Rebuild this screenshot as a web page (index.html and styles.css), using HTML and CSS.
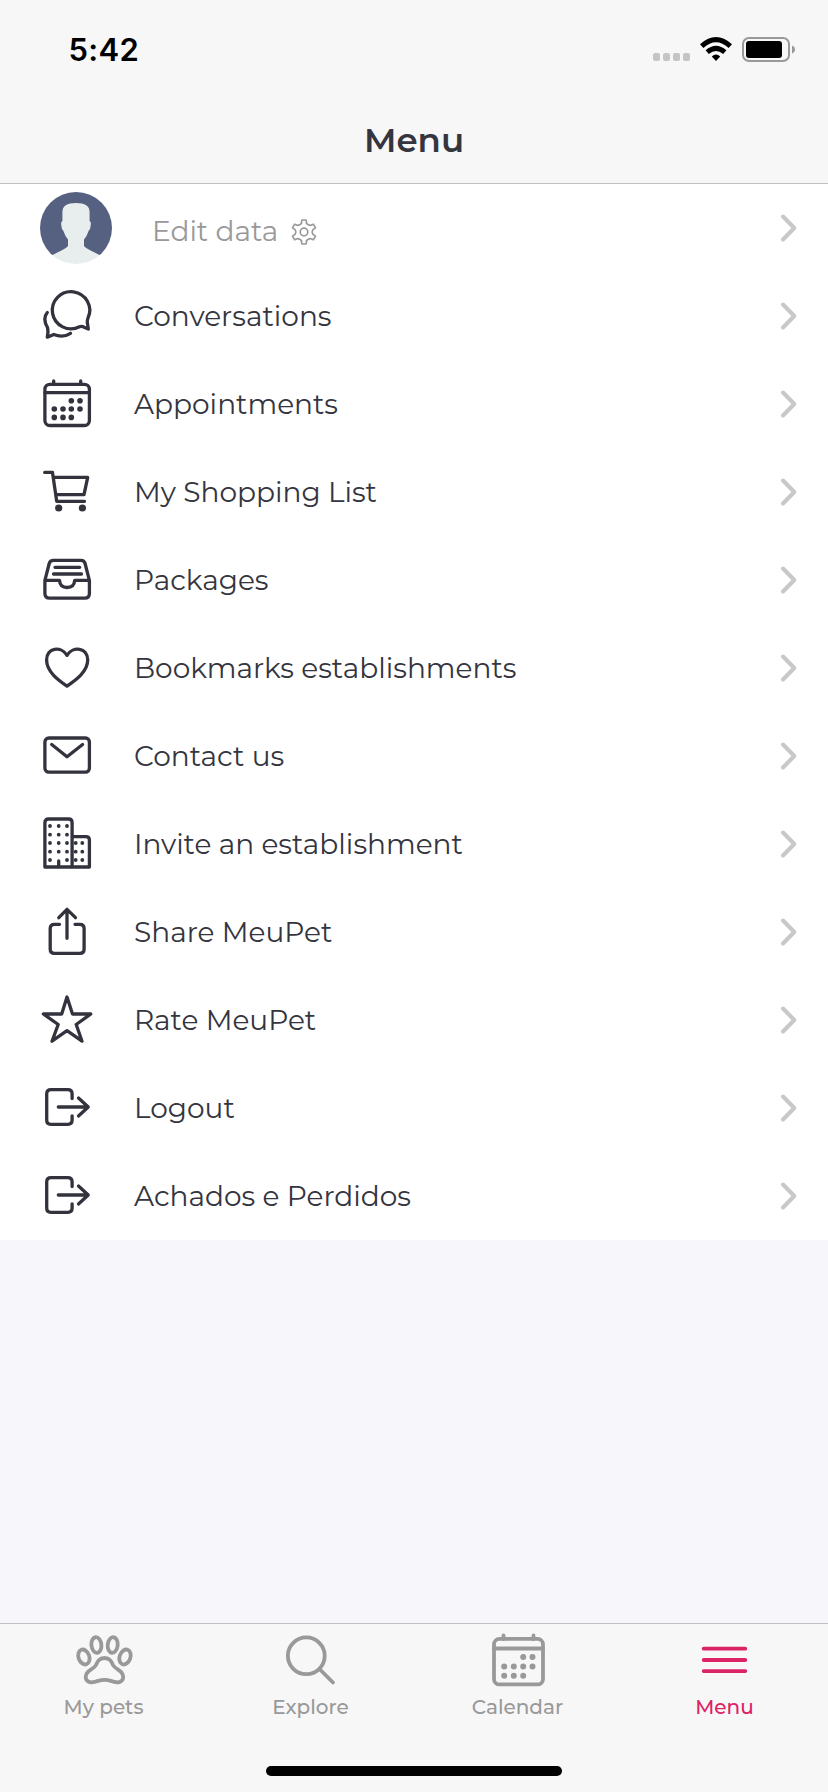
FILE: index.html
```html
<!DOCTYPE html>
<html lang="en">
<head>
<meta charset="utf-8">
<title>Menu</title>
<link rel="stylesheet" href="styles.css">
</head>
<body>
<div class="screen">
  <header class="header">
    <div class="status">
      <span class="time">5:42</span>
      <div class="indicators">
        <div class="signal"><i></i><i></i><i></i><i></i></div>
        <svg class="wifi" viewBox="0 0 32 24" fill="none" stroke="#000" stroke-width="5"><path d="M1.7 9.2Q16-3.8 30.3 9.2"/><path d="M7.2 15.2Q16 7.6 24.8 15.2"/><path d="M16 24l-4.2-4.6q4.2-3.6 8.4 0z" fill="#000" stroke="none"/></svg>
        <svg class="battery" viewBox="0 0 54 26"><rect x="1" y="1" width="46" height="23" rx="6" fill="none" stroke="#999" stroke-width="2"/><rect x="4" y="4" width="36" height="17" rx="3"/><path d="M50 8.5q3 1.2 3 4t-3 4z" fill="#999"/></svg>
      </div>
    </div>
    <h1 class="title">Menu</h1>
  </header>

  <main class="list">
    <a class="row profile">
      <svg class="avatar" viewBox="0 0 72 72"><defs><clipPath id="round"><circle cx="36" cy="36" r="36"/></clipPath></defs><g clip-path="url(#round)"><path fill="#566182" d="M0 0H72V63H0Z"/><path fill="#e8eded" d="M22.4 20Q22.4 11 36 11T49.6 20V29Q51.5 30 50.6 34 50 38 48.8 38.5 47 44 44 47.5V54Q45 56 59.5 63L72 63V72H0V63L12.5 63Q27 56 28 54V47.5Q25 44 23.2 38.5 22 38 21.4 34 20.5 30 22.4 29Z"/></g></svg>
      <span class="label edit">Edit data</span>
      <svg class="gear" viewBox="0 0 26 26"><path d="M10.400 4.400 10.900 1H15.100L15.600 4.400Q17 6.100 19.150 6.450L22.340 5.180 24.440 8.820 21.750 10.950Q20.600 13 21.750 15.050L24.440 17.180 22.340 20.820 19.150 19.550Q17 19.900 15.600 21.600L15.100 25H10.900L10.400 21.600Q9 19.900 6.850 19.550L3.660 20.820 1.560 17.180 4.250 15.050Q5.400 13 4.250 10.950L1.560 8.820 3.660 5.180 6.850 6.450Q9 6.100 10.400 4.400Z"/><circle cx="13" cy="13" r="3.800"/></svg>
      <svg class="chevron" viewBox="0 0 18 28"><path d="M3 2.500 14.300 14 3 25.500"/></svg>
    </a>
    <a class="row">
      <svg class="icon" viewBox="0 0 60 60"><path d="M42.500 40.800Q45 39.800 47 41.200L51.300 43 50.300 36.500Q50 34.500 51 32A18.700 18.600 0 1 0 42.500 40.800Z"/><path d="M10.300 26.500C6.500 31 7.500 36.500 10.500 41.500Q11.500 45 10.300 51.200L16.800 48.500C23 51 28.500 50.500 33.500 47.300"/></svg>
      <span class="label">Conversations</span>
      <svg class="chevron" viewBox="0 0 18 28"><path d="M3 2.500 14.300 14 3 25.500"/></svg>
    </a>
    <a class="row">
      <svg class="icon" viewBox="0 0 60 60"><rect x="7.900" y="10.300" width="44.500" height="41.200" rx="5"/><path d="M8 18.700H52M16.700 10V7M43.700 10V7"/><path class="dots" d="M34.300 26.700h0M43 26.700h0M17.300 35h0M26 35h0M34.300 35h0M43 35h0M17.300 43.400h0M26 43.400h0M34.300 43.400h0"/></svg>
      <span class="label">Appointments</span>
      <svg class="chevron" viewBox="0 0 18 28"><path d="M3 2.500 14.300 14 3 25.500"/></svg>
    </a>
    <a class="row">
      <svg class="icon" viewBox="0 0 60 60"><path d="M7.700 10.400H15.500L19.700 39.300H47.500M16.300 15.400H50.700L47 32.600H18.700"/><circle class="solid" cx="21.700" cy="46" r="3.600"/><circle class="solid" cx="45.400" cy="46" r="3.600"/></svg>
      <span class="label">My Shopping List</span>
      <svg class="chevron" viewBox="0 0 18 28"><path d="M3 2.500 14.300 14 3 25.500"/></svg>
    </a>
    <a class="row">
      <svg class="icon" viewBox="0 0 60 60"><path d="M16.500 10.300H44Q47.500 10.300 48.200 14L52.400 30.400V43.500Q52.400 48.200 47.700 48.200H12.600Q7.900 48.200 7.900 43.500V30.400L12.100 14Q12.800 10.300 16.500 10.300ZM8 30.400H22.500Q23 37.500 30.100 37.500T37.700 30.400H52.300M18 17.300H42.700M16.500 24H44.500"/></svg>
      <span class="label">Packages</span>
      <svg class="chevron" viewBox="0 0 18 28"><path d="M3 2.500 14.300 14 3 25.500"/></svg>
    </a>
    <a class="row">
      <svg class="icon" viewBox="0 0 60 60"><path d="M30 17.300C24 7.500 9.600 9.500 9.600 22C9.600 34 22 42.500 30 48.100C38 42.500 50.700 34 50.700 22C50.700 9.500 36 7.500 30 17.300Z"/></svg>
      <span class="label">Bookmarks establishments</span>
      <svg class="chevron" viewBox="0 0 18 28"><path d="M3 2.500 14.300 14 3 25.500"/></svg>
    </a>
    <a class="row">
      <svg class="icon" viewBox="0 0 60 60"><rect x="7.900" y="12" width="44.500" height="34.200" rx="4"/><path d="M14.700 18.500 30 30.700 45.600 18.500"/></svg>
      <span class="label">Contact us</span>
      <svg class="chevron" viewBox="0 0 18 28"><path d="M3 2.500 14.300 14 3 25.500"/></svg>
    </a>
    <a class="row">
      <svg class="icon" viewBox="0 0 60 60"><path d="M7.900 53V8.500Q7.900 5 11.400 5H31.600Q35.100 5 35.100 8.500V53ZM35.100 22.600H49Q52.400 22.600 52.400 26V53H35.100M21.700 52V47"/><path class="dots small" d="M13 12h0M21.700 12h0M30 12h0M13 20.700h0M21.700 20.700h0M30 20.700h0M13 29h0M21.700 29h0M30 29h0M13 37.700h0M21.700 37.700h0M30 37.700h0M13 46h0M30 46h0M38.700 29h0M45.300 29h0M38.700 37.700h0M45.300 37.700h0M38.700 46h0M45.300 46h0"/></svg>
      <span class="label">Invite an establishment</span>
      <svg class="chevron" viewBox="0 0 18 28"><path d="M3 2.500 14.300 14 3 25.500"/></svg>
    </a>
    <a class="row">
      <svg class="icon" viewBox="0 0 60 60"><path d="M30 36.300V7.500M21.800 15.700 30 7.300 38.500 15.700M22.500 22.300H17.500Q13.200 22.300 13.200 26.600V47Q13.200 51.400 17.500 51.400H42.800Q47.100 51.400 47.100 47V26.600Q47.100 22.300 42.800 22.300H38"/></svg>
      <span class="label">Share MeuPet</span>
      <svg class="chevron" viewBox="0 0 18 28"><path d="M3 2.500 14.300 14 3 25.500"/></svg>
    </a>
    <a class="row">
      <svg class="icon" viewBox="0 0 60 60"><path d="M30 7 35.500 24H53.800L39.200 34.500 45 51.200 30 40.700 15 51.200 21.200 34.500 6.400 24H24.700Z"/></svg>
      <span class="label">Rate MeuPet</span>
      <svg class="chevron" viewBox="0 0 18 28"><path d="M3 2.500 14.300 14 3 25.500"/></svg>
    </a>
    <a class="row">
      <svg class="icon" viewBox="0 0 60 60"><path d="M35.100 20.500V16Q35.100 11.700 30.800 11.700H14Q9.700 11.700 9.700 16V42Q9.700 46.300 14 46.300H30.800Q35.100 46.300 35.100 42V37.800M21.300 29H51.200M41.500 20 51.200 29 41.500 38"/></svg>
      <span class="label">Logout</span>
      <svg class="chevron" viewBox="0 0 18 28"><path d="M3 2.500 14.300 14 3 25.500"/></svg>
    </a>
    <a class="row">
      <svg class="icon" viewBox="0 0 60 60"><path d="M35.100 20.500V16Q35.100 11.700 30.800 11.700H14Q9.700 11.700 9.700 16V42Q9.700 46.300 14 46.300H30.800Q35.100 46.300 35.100 42V37.800M21.300 29H51.200M41.500 20 51.200 29 41.500 38"/></svg>
      <span class="label">Achados e Perdidos</span>
      <svg class="chevron" viewBox="0 0 18 28"><path d="M3 2.500 14.300 14 3 25.500"/></svg>
    </a>
  </main>

  <footer class="footer">
    <nav class="tabs">
      <a class="tab">
        <svg viewBox="0 0 64 64"><ellipse cx="11.900" cy="29" rx="5.400" ry="7.700" transform="rotate(-20 11.900 29)"/><ellipse cx="24.400" cy="17" rx="5" ry="7.800" transform="rotate(-6 24.400 17)"/><ellipse cx="40.700" cy="17" rx="5" ry="7.800" transform="rotate(6 40.700 17)"/><ellipse cx="53" cy="29" rx="5.400" ry="7.700" transform="rotate(20 53 29)"/><path d="M32.500 30C38 30 39.500 33.500 41 37C43.500 42 51.200 41.500 51.200 49C51.200 53 47.500 55 44 54.200C40 53.500 37 51.800 32.500 51.800S25 53.500 21 54.200C17.500 55 13.700 53 13.700 49C13.700 41.500 21.500 42 24 37C25.500 33.500 27 30 32.500 30Z"/></svg>
        <span class="cap">My pets</span>
      </a>
      <a class="tab">
        <svg viewBox="0 0 64 64"><circle cx="27.300" cy="27.800" r="18.400"/><path d="M41 41.500 54 54.500"/></svg>
        <span class="cap">Explore</span>
      </a>
      <a class="tab">
        <svg viewBox="0 0 64 64"><rect x="8" y="10.900" width="49" height="45.500" rx="5.500"/><path d="M8 20.500H57M17.500 11V7.500M47.500 11V7.500"/><path class="dots" d="M37.200 29h0M46.500 29h0M18.200 38.400h0M27.800 38.400h0M37.200 38.400h0M46.500 38.400h0M18.200 47.800h0M27.800 47.800h0M37.200 47.800h0"/></svg>
        <span class="cap">Calendar</span>
      </a>
      <a class="tab active">
        <svg viewBox="0 0 64 64"><path d="M10.700 20.700H52.300M10.700 32H52.300M10.700 43.100H52.300"/></svg>
        <span class="cap">Menu</span>
      </a>
    </nav>
    <div class="home"></div>
  </footer>
</div>
</body>
</html>
```
FILE: styles.css
```css
* { box-sizing: border-box; }
body { margin: 0; font-family: Montserrat, Inter, "Liberation Sans", sans-serif; color: #34353e; background: #f6f6fb; }
.screen { width: 828px; height: 1792px; display: flex; flex-direction: column; overflow: hidden; }
.header { height: 184px; flex: none; background: #f7f7f7; border-bottom: 1px solid #bfbfc2; }
.status { height: 97px; padding: 0 32px 0 68.5px; display: flex; justify-content: space-between; align-items: center; }
.time { font-family: Inter, sans-serif; font-size: 31px; line-height: 40px; font-weight: 600; letter-spacing: 0.3px; color: #000; padding-top: 3px; }
.indicators { display: flex; align-items: flex-start; height: 26px; margin-top: 3px; }
.signal { display: flex; gap: 3px; margin: 16px 10px 0 0; }
.signal i { width: 7px; height: 8px; border-radius: 2px; background: #c5c5c6; }
.wifi { width: 32px; height: 24px; margin-right: 10px; }
.battery { width: 54px; height: 26px; }
.title { margin: 0; font-size: 34px; line-height: 86px; font-weight: 600; text-align: center; }
.list { flex: none; background: #fff; }
.row { height: 88px; display: flex; align-items: center; padding: 0 30px 0 37px; }
.icon { width: 60px; height: 60px; margin-right: 37px; flex: none; }
.icon, .tab svg, .gear, .chevron { fill: none; stroke: #32333d; stroke-width: 3.3px; stroke-linecap: round; stroke-linejoin: round; }
.icon .dots { stroke-width: 5.6px; }
.icon .small { stroke-width: 3.8px; }
.icon .solid { fill: #32333d; stroke: none; }
.label { font-size: 28px; line-height: 40px; font-weight: 400; white-space: nowrap; }
.profile { padding-left: 40px; }
.avatar { width: 72px; height: 72px; }
.edit { color: #999; margin: 6px 0 0 40px; }
.gear { width: 26px; height: 26px; margin: 8px 0 0 13px; stroke: #999; stroke-width: 1.7px; }
.chevron { width: 18px; height: 28px; margin-left: auto; stroke: #c8c8c9; stroke-width: 4px; }

.footer { margin-top: auto; height: 169px; flex: none; background: #f7f7f7; border-top: 1px solid #bfbfc2; }
.tabs { display: grid; grid-template-columns: repeat(4, 1fr); height: 142px; padding-top: 4px; }
.tab { display: flex; flex-direction: column; align-items: center; color: #999; }
.tab svg { width: 64px; height: 64px; stroke: currentColor; stroke-width: 3.8px; }
.tab .dots { stroke-width: 6px; }
.cap { font-size: 20px; line-height: 28px; font-weight: 500; padding-top: 1px; }
.tab.active { color: #dc2366; }
.home { width: 296px; height: 10px; border-radius: 5px; background: #000; margin: 0 auto; }
```
